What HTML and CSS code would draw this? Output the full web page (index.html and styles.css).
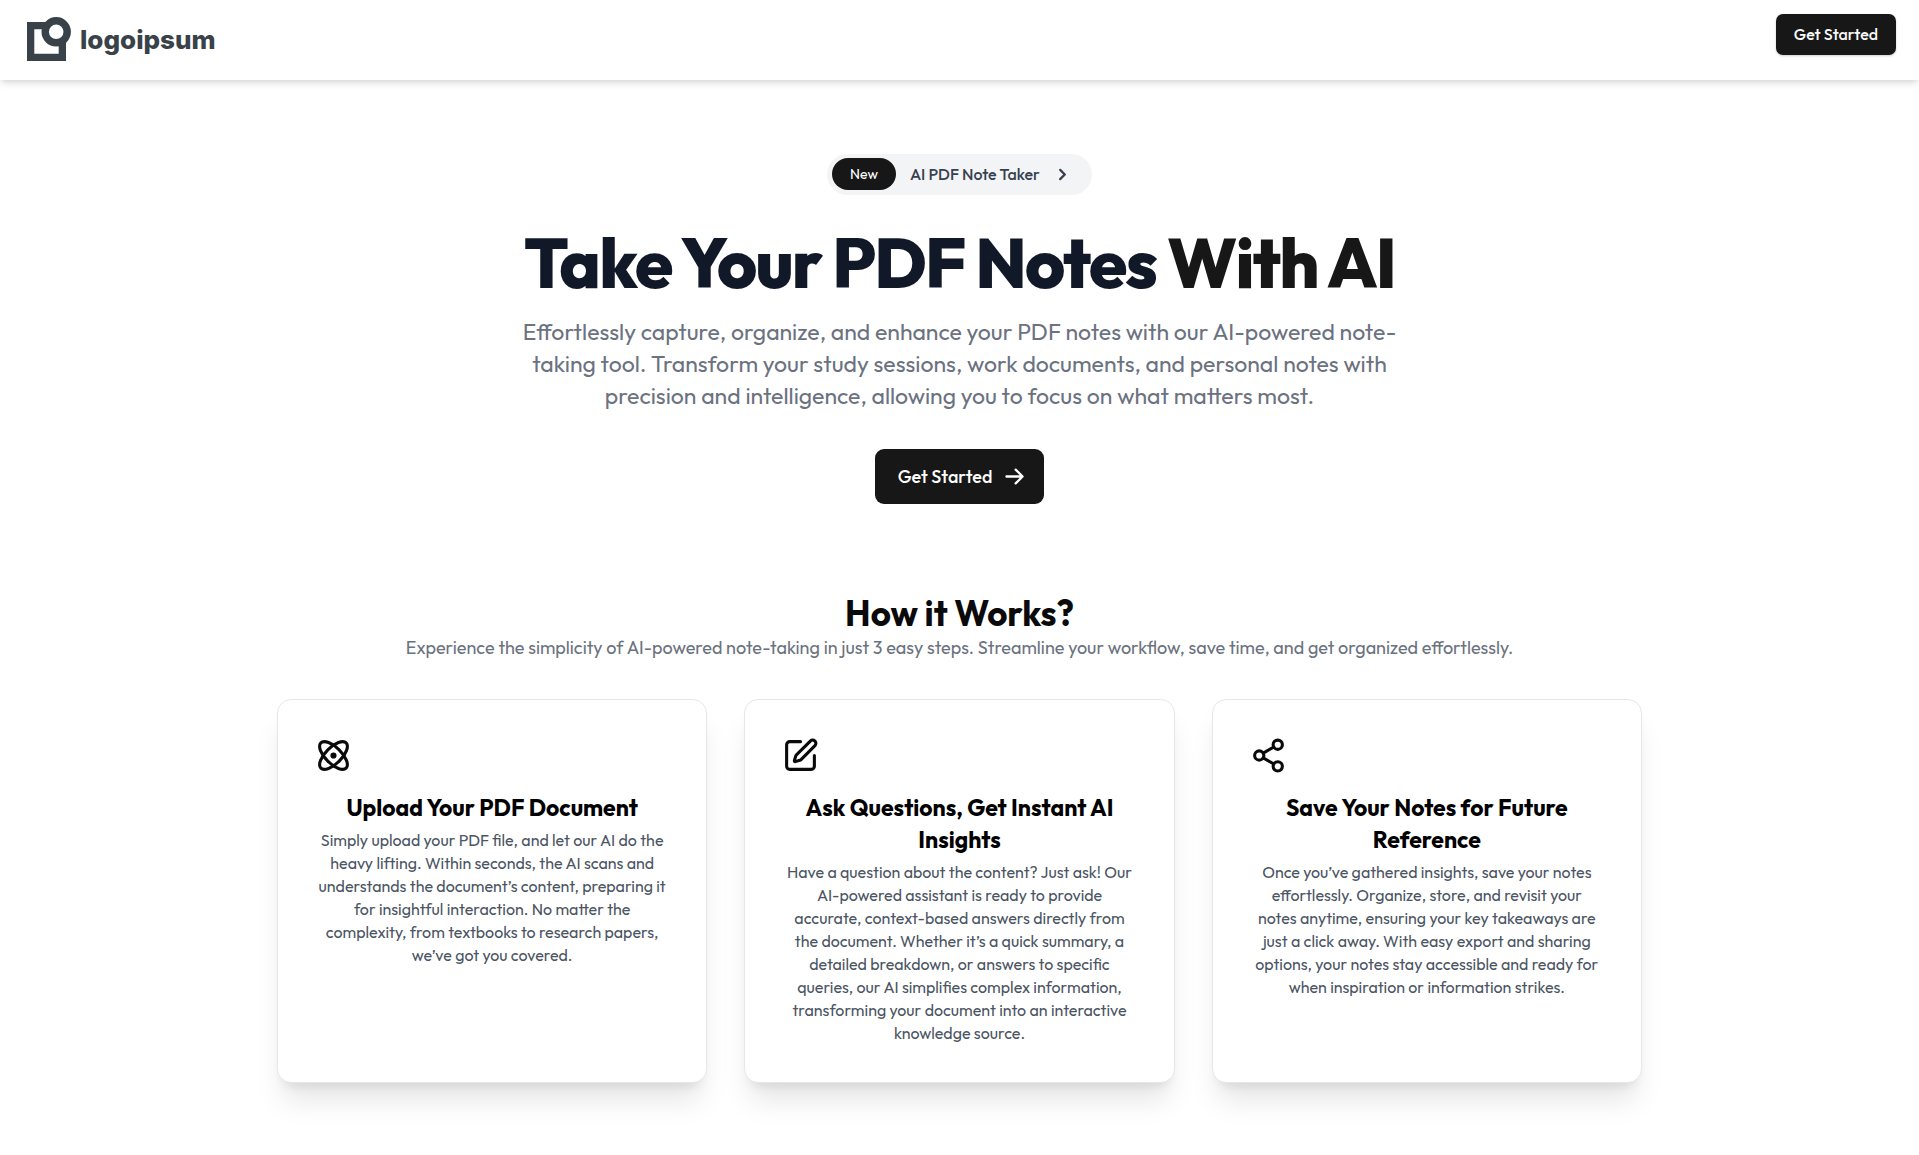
FILE: index.html
```html
<!DOCTYPE html>
<html lang="en">
<head>
  <meta charset="utf-8">
  <meta name="viewport" content="width=device-width, initial-scale=1">
  <title>AI PDF Note Taker</title>
  <link rel="stylesheet" href="styles.css">
</head>
<body>
  <header class="header">
    <a class="logo" href="#">
      <svg class="logo-mark" viewBox="0 0 44 44" aria-hidden="true">
        <path d="M3.65 8.65h31.7v31.7H3.65z" fill="none" stroke="#394149" stroke-width="7.3"/>
        <circle cx="29.2" cy="14.8" r="11" fill="#fff" stroke="#394149" stroke-width="7.4"/>
      </svg>
      <span>logoipsum</span>
    </a>
    <button class="btn btn-small" type="button">Get Started</button>
  </header>

  <main>
    <section class="hero">
      <a class="badge" href="#">
        <span class="badge-tag">New</span>
        <span>AI PDF Note Taker</span>
        <svg class="icon-small" viewBox="0 0 20 20" fill="currentColor" aria-hidden="true"><path fill-rule="evenodd" d="M7.293 14.707a1 1 0 010-1.414L10.586 10 7.293 6.707a1 1 0 011.414-1.414l4 4a1 1 0 010 1.414l-4 4a1 1 0 01-1.414 0z" clip-rule="evenodd"/></svg>
      </a>
      <h1 class="hero-title">Take Your PDF Notes <span class="accent">With AI</span></h1>
      <p class="hero-text">Effortlessly capture, organize, and enhance your PDF notes with our AI-powered note-taking tool. Transform your study sessions, work documents, and personal notes with precision and intelligence, allowing you to focus on what matters most.</p>
      <button class="btn btn-large" type="button">
        Get Started
        <svg class="icon-small" viewBox="0 0 20 20" fill="currentColor" aria-hidden="true"><path fill-rule="evenodd" d="M10.293 3.293a1 1 0 011.414 0l6 6a1 1 0 010 1.414l-6 6a1 1 0 01-1.414-1.414L14.586 11H3a1 1 0 110-2h11.586l-4.293-4.293a1 1 0 010-1.414z" clip-rule="evenodd"/></svg>
      </button>
    </section>

    <section class="steps">
      <h2 class="steps-title">How it Works?</h2>
      <p class="steps-text">Experience the simplicity of AI-powered note-taking in just 3 easy steps. Streamline your workflow, save time, and get organized effortlessly.</p>
      <div class="cards">
        <article class="card">
          <svg class="card-icon" viewBox="0 0 24 24" aria-hidden="true"><circle cx="12" cy="12" r="1"/><path d="M20.2 20.2c2.04-2.03.02-7.36-4.5-11.9-4.54-4.52-9.87-6.54-11.9-4.5-2.04 2.03-.02 7.36 4.5 11.9 4.54 4.52 9.87 6.54 11.9 4.5Z"/><path d="M15.7 15.7c4.52-4.54 6.54-9.87 4.5-11.9-2.03-2.04-7.36-.02-11.9 4.5-4.52 4.54-6.54 9.87-4.5 11.9 2.03 2.04 7.36.02 11.9-4.5Z"/></svg>
          <h3 class="card-title">Upload Your PDF Document</h3>
          <p class="card-text">Simply upload your PDF file, and let our AI do the heavy lifting. Within seconds, the AI scans and understands the document’s content, preparing it for insightful interaction. No matter the complexity, from textbooks to research papers, we’ve got you covered.</p>
        </article>
        <article class="card">
          <svg class="card-icon" viewBox="0 0 24 24" aria-hidden="true"><path d="M12 3H5a2 2 0 0 0-2 2v14a2 2 0 0 0 2 2h14a2 2 0 0 0 2-2v-7"/><path d="M18.375 2.625a1 1 0 0 1 3 3l-9.013 9.014a2 2 0 0 1-.853.505l-2.873.84a.5.5 0 0 1-.62-.62l.84-2.873a2 2 0 0 1 .506-.852z"/></svg>
          <h3 class="card-title">Ask Questions, Get Instant AI Insights</h3>
          <p class="card-text">Have a question about the content? Just ask! Our AI-powered assistant is ready to provide accurate, context-based answers directly from the document. Whether it’s a quick summary, a detailed breakdown, or answers to specific queries, our AI simplifies complex information, transforming your document into an interactive knowledge source.</p>
        </article>
        <article class="card">
          <svg class="card-icon" viewBox="0 0 24 24" aria-hidden="true"><circle cx="18" cy="5" r="3"/><circle cx="6" cy="12" r="3"/><circle cx="18" cy="19" r="3"/><path d="M8.59 13.51l6.83 3.98M15.41 6.51l-6.82 3.98"/></svg>
          <h3 class="card-title">Save Your Notes for Future Reference</h3>
          <p class="card-text">Once you’ve gathered insights, save your notes effortlessly. Organize, store, and revisit your notes anytime, ensuring your key takeaways are just a click away. With easy export and sharing options, your notes stay accessible and ready for when inspiration or information strikes.</p>
        </article>
      </div>
    </section>
  </main>
</body>
</html>
```
FILE: styles.css
```css
* {
  box-sizing: border-box;
  margin: 0;
}

body {
  background: #fff;
  color: #0a0a0a;
  font-family: "Outfit", "Lato", sans-serif;
  font-size: 16px;
  line-height: 23px;
}

a {
  color: inherit;
  text-decoration: none;
}

/* Header */
.header {
  display: flex;
  justify-content: space-between;
  align-items: flex-start;
  min-height: 80px;
  padding: 14px 23px;
  box-shadow: 0 5px 7px -1px rgba(0, 0, 0, 0.1), 0 2px 5px -2px rgba(0, 0, 0, 0.1);
}

.logo {
  display: flex;
  align-items: center;
  gap: 9px;
  padding: 3px 4px;
  color: #394149;
  font-family: "Inter", sans-serif;
  font-size: 26px;
  font-weight: 800;
}

.logo-mark {
  width: 44px;
  height: 44px;
}

/* Buttons */
.btn {
  display: inline-flex;
  align-items: center;
  justify-content: center;
  border: 0;
  background: #171717;
  color: #fafafa;
  font-family: inherit;
  font-weight: 500;
  cursor: pointer;
}

.btn-small {
  padding: 9px 18px;
  border-radius: 7px;
  font-size: 16px;
  line-height: 23px;
  box-shadow: 0 1px 3px rgba(0, 0, 0, 0.1), 0 1px 2px rgba(0, 0, 0, 0.1);
}

.btn-large {
  gap: 11px;
  padding: 14px 18px 14px 23px;
  border-radius: 9px;
  color: #fff;
  font-size: 18px;
  line-height: 27px;
}

.icon-small {
  width: 23px;
  height: 23px;
}

/* Hero */
.hero {
  display: flex;
  flex-direction: column;
  align-items: center;
  padding: 74px 18px 89px;
  text-align: center;
}

.badge {
  display: flex;
  align-items: center;
  margin-bottom: 33px;
  padding: 4px 18px 5px 5px;
  border-radius: 999px;
  background: #f3f4f6;
  color: #374151;
  font-weight: 500;
}

.badge-tag {
  margin-right: 14px;
  padding: 4px 18px;
  border-radius: 999px;
  background: #171717;
  color: #fff;
  font-size: 14px;
  font-weight: 400;
  line-height: 24px;
}

.badge .icon-small {
  margin-left: 11px;
}

.hero-title {
  margin-bottom: 19px;
  color: #111827;
  font-size: 69px;
  font-weight: 800;
  line-height: 69px;
  letter-spacing: -0.025em;
}

.accent {
  color: #171717;
}

.hero-text {
  max-width: 900px;
  margin-bottom: 37px;
  color: #6b7280;
  font-size: 23px;
  line-height: 32px;
}

/* Steps */
.steps {
  padding: 0 18px 69px;
  text-align: center;
}

.steps-title {
  font-size: 35px;
  font-weight: 700;
  line-height: 41px;
}

.steps-text {
  color: #6b7280;
  font-size: 18px;
  line-height: 28px;
}

.cards {
  display: grid;
  grid-template-columns: repeat(auto-fit, minmax(300px, 1fr));
  gap: 37px;
  max-width: 1365px;
  margin: 37px auto 0;
}

.card {
  padding: 37px;
  border: 1px solid #e5e7eb;
  border-radius: 14px;
  background: #fff;
  box-shadow: 0 23px 29px -6px rgba(0, 0, 0, 0.1), 0 9px 12px -7px rgba(0, 0, 0, 0.1);
}

.card-icon {
  display: block;
  width: 37px;
  height: 37px;
  margin-bottom: 18px;
  fill: none;
  stroke: currentColor;
  stroke-width: 2;
  stroke-linecap: round;
  stroke-linejoin: round;
}

.card-title {
  margin-bottom: 5px;
  color: #000;
  font-size: 23px;
  font-weight: 700;
  line-height: 32px;
}

.card-text {
  padding: 0 3px;
  color: #4b5563;
}
```
